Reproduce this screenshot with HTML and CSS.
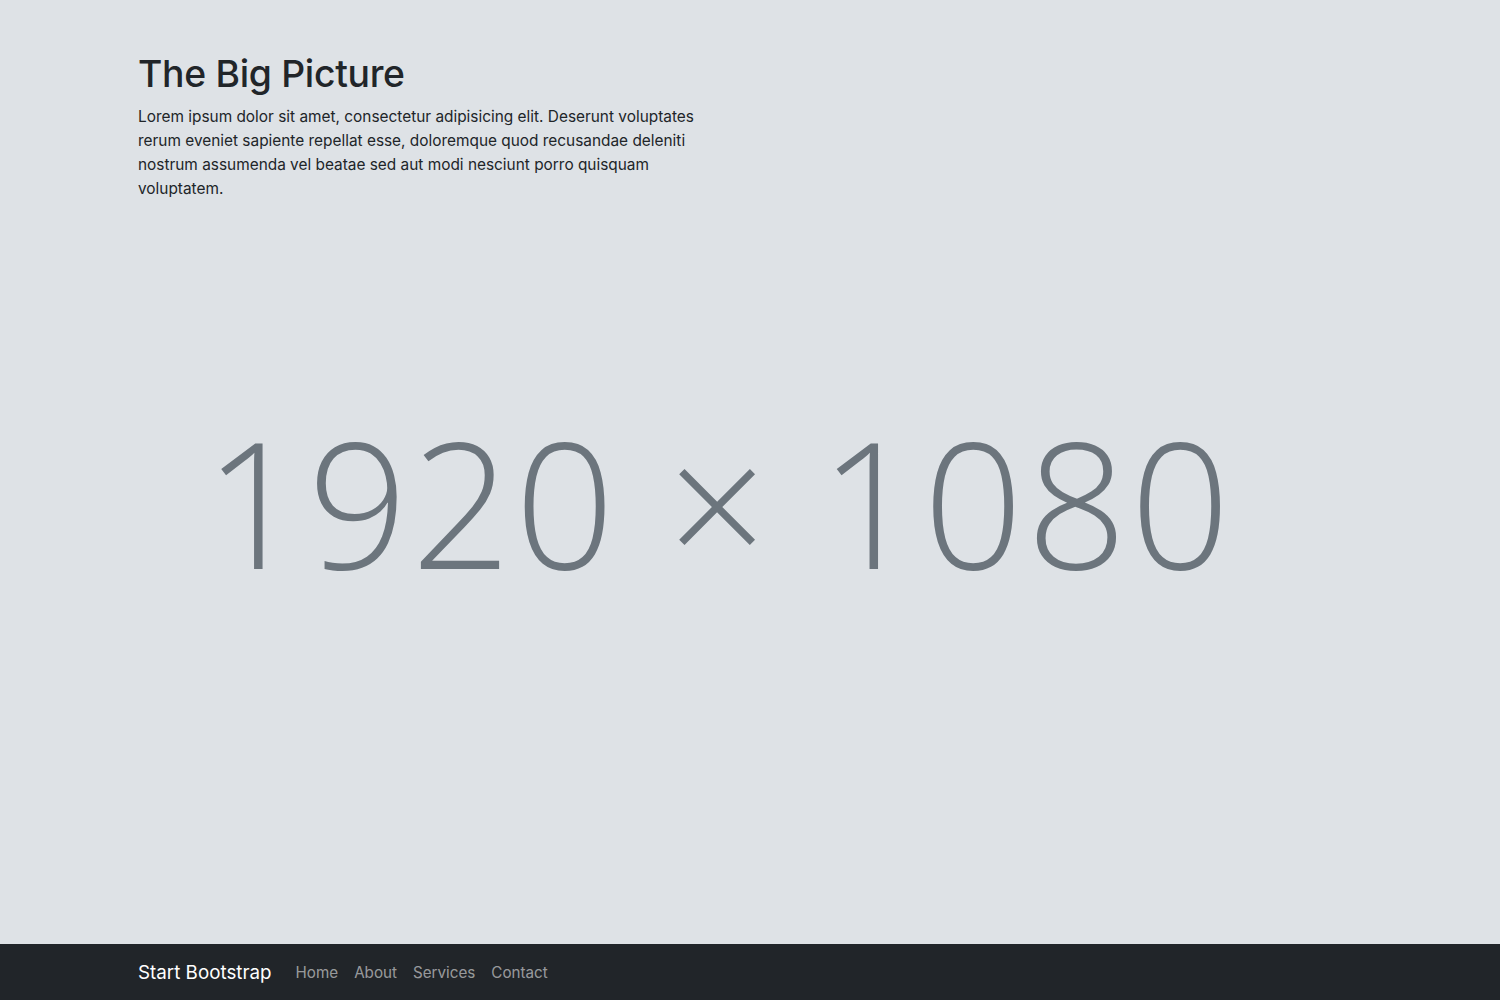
FILE: index.html
```html
<!DOCTYPE html>
<html lang="en">
<head>
<meta charset="utf-8">
<title>The Big Picture</title>
<link rel="stylesheet" href="styles.css">
</head>
<body>
<div class="page">
  <section class="masthead">
    <div class="container">
      <h1 class="title">The Big Picture</h1>
      <p class="lead-text">Lorem ipsum dolor sit amet, consectetur adipisicing elit. Deserunt voluptates rerum eveniet sapiente repellat esse, doloremque quod recusandae deleniti nostrum assumenda vel beatae sed aut modi nesciunt porro quisquam voluptatem.</p>
    </div>
  </section>
  <section class="picture">
    <div class="dims">1920 × 1080</div>
  </section>
  <nav class="navbar">
    <div class="container nav-inner">
      <a class="brand" href="#">Start Bootstrap</a>
      <ul class="nav-links">
        <li><a href="#">Home</a></li>
        <li><a href="#">About</a></li>
        <li><a href="#">Services</a></li>
        <li><a href="#">Contact</a></li>
      </ul>
    </div>
  </nav>
</div>
</body>
</html>
```

FILE: styles.css
```css
* { box-sizing: border-box; }
html, body { margin: 0; padding: 0; }
body {
  background: #dee2e6;
  color: #212529;
  font-family: Inter, "Liberation Sans", sans-serif;
  font-size: 16px;
  line-height: 1.5;
}
.page {
  height: 100vh;
  display: flex;
  flex-direction: column;
}
.container {
  padding-left: 138px;
  padding-right: 138px;
}
.masthead {
  padding-top: 52px;
}
.title {
  margin: 0 0 8px;
  font-size: 37.3px;
  font-weight: 500;
  line-height: 1.2;
  letter-spacing: -0.3px;
}
.lead-text {
  margin: 0;
  max-width: 570px;
  font-size: 15.4px;
  line-height: 24px;
}
.picture {
  flex: 1;
  display: flex;
  align-items: center;
  justify-content: center;
  padding-right: 62px;
  padding-bottom: 142px;
}
.dims {
  font-family: "Open Sans", sans-serif;
  font-weight: 300;
  font-size: 175px;
  letter-spacing: 3.6px;
  color: #6c757d;
  line-height: 1;
}
.navbar {
  height: 56px;
  background: #212529;
  flex-shrink: 0;
}
.nav-inner {
  height: 100%;
  display: flex;
  align-items: center;
  padding-top: 2px;
}
.brand {
  color: #fff;
  text-decoration: none;
  font-size: 18.8px;
  margin-right: 16px;
}
.nav-links {
  list-style: none;
  margin: 0;
  padding: 0;
  display: flex;
}
.nav-links a {
  display: block;
  padding: 8px;
  color: rgba(255, 255, 255, 0.55);
  text-decoration: none;
  font-size: 15.2px;
}
```
